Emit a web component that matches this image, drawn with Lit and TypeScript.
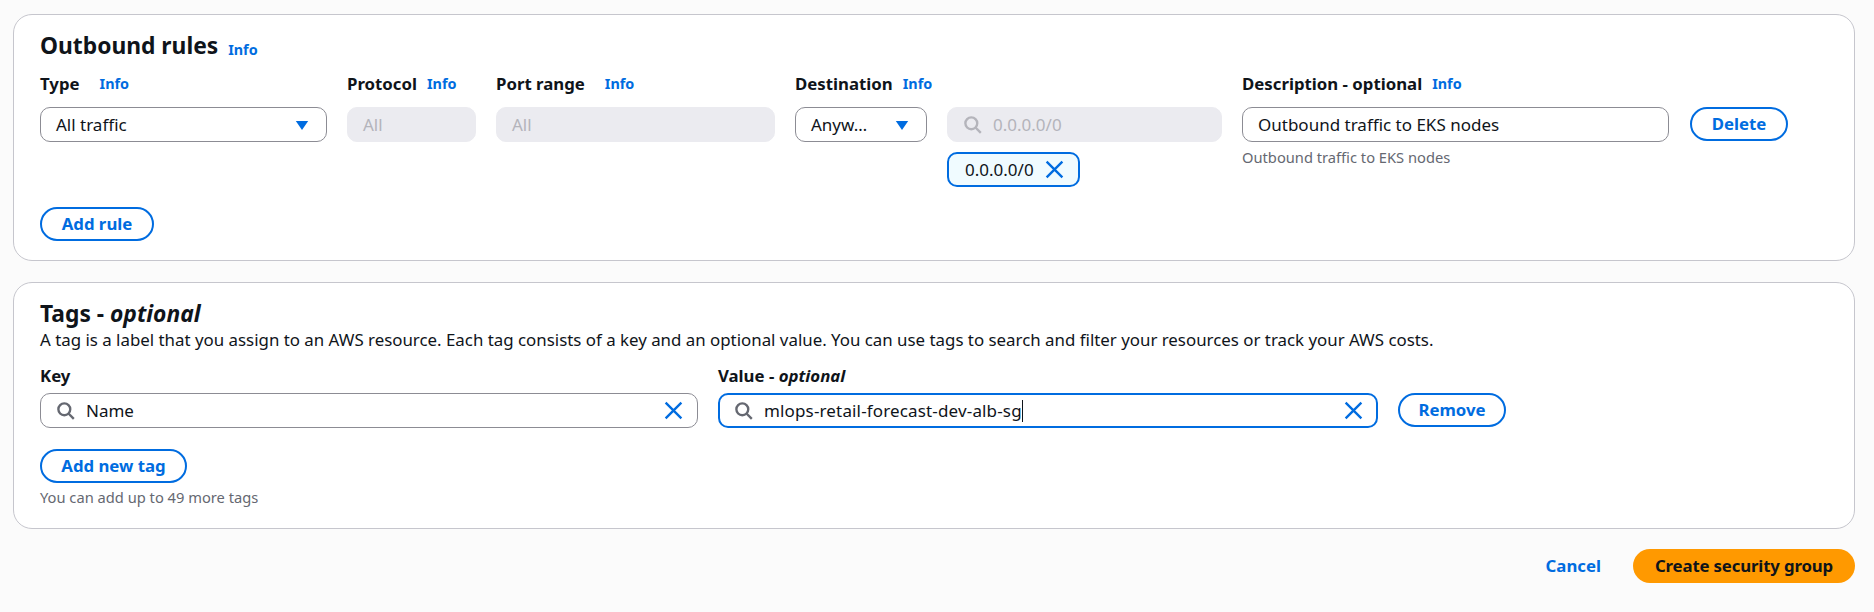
import { LitElement, html, css, svg } from "lit";
import { customElement } from "lit/decorators.js";

const searchIcon = html`<svg class="icon" viewBox="0 0 16 16" fill="none" stroke="currentColor" stroke-width="2">
  ${svg`<circle cx="7" cy="7" r="5"></circle><path d="M15 15l-4.5-4.5"></path>`}
</svg>`;

const closeIcon = html`<svg class="icon close" viewBox="0 0 16 16" fill="none" stroke="currentColor" stroke-width="1.8">
  ${svg`<path d="M2 2l12 12M14 2L2 14"></path>`}
</svg>`;

const caretIcon = html`<svg class="caret" viewBox="0 0 16 16" fill="currentColor">
  ${svg`<path d="M2.5 4.5h11L8 12.5z"></path>`}
</svg>`;

@customElement("app-root")
export class AppRoot extends LitElement {
  static styles = css`
    :host {
      display: block;
      min-height: 612px;
      background: #fbfbfb;
      color: #0f141a;
      font-family: "Noto Sans", "Liberation Sans", sans-serif;
      font-size: 16.8px;
      line-height: 24px;
    }
    .page {
      padding: 14px 19px 0 13px;
      display: flex;
      flex-direction: column;
      gap: 21px;
    }
    .card {
      background: #fff;
      border: 1px solid #c6c6cd;
      border-radius: 19px;
      padding: 16px 26px 19px;
    }
    h2 {
      margin: 0;
      font-size: 22.8px;
      line-height: 29px;
      font-weight: 700;
    }
    h2 em {
      font-weight: 700;
    }
    .info {
      color: #006ce0;
      font-size: 14.4px;
      font-weight: 700;
    }
    h2 .info {
      margin-left: 4px;
      vertical-align: -1px;
    }
    .rule-row {
      display: grid;
      grid-template-columns: 287px 129px 279px 132px 275px 427px auto;
      column-gap: 20px;
      margin-top: 8px;
      align-items: start;
    }
    .field {
      display: flex;
      flex-direction: column;
    }
    .label {
      display: flex;
      align-items: center;
      gap: 10px;
      font-weight: 700;
      font-size: 16.8px;
      height: 24px;
      margin-bottom: 11px;
      white-space: nowrap;
    }
    .label.wide {
      gap: 20px;
    }
    .control {
      box-sizing: border-box;
      height: 35px;
      display: flex;
      align-items: center;
      gap: 11px;
      padding: 0 15px;
      border: 1px solid #8c8c94;
      border-radius: 10px;
      background: #fff;
      font-size: 17px;
      white-space: nowrap;
    }
    .control .grow {
      flex: 1;
    }
    .control.disabled {
      background: #ebebf0;
      border-color: #ebebf0;
      color: #b4b4bb;
    }
    .control.focused {
      border: 2px solid #006ce0;
      padding: 0 14px;
      letter-spacing: 0.15px;
    }
    .control.dest {
      gap: 0;
      justify-content: space-between;
    }
    .icon {
      width: 19px;
      height: 19px;
      flex: none;
      color: #656871;
    }
    .disabled .icon {
      color: #b4b4bb;
    }
    .icon.close {
      width: 21px;
      height: 21px;
      margin: 0 -2px;
      color: #006ce0;
    }
    .caret {
      width: 18px;
      height: 18px;
      flex: none;
      color: #006ce0;
    }
    .token {
      box-sizing: border-box;
      align-self: flex-start;
      display: flex;
      align-items: center;
      gap: 12px;
      width: 133px;
      height: 35px;
      margin-top: 10px;
      padding: 0 0 0 16px;
      background: #f0fbff;
      border: 2px solid #006ce0;
      border-radius: 10px;
      font-size: 17px;
    }
    .hint {
      margin-top: 3px;
      font-size: 14.7px;
      color: #656871;
    }
    .tags .hint {
      margin-top: 2px;
    }
    .btn {
      box-sizing: border-box;
      display: inline-flex;
      align-items: center;
      justify-content: center;
      height: 34px;
      border: 2px solid #006ce0;
      border-radius: 20px;
      background: #fff;
      color: #006ce0;
      font-weight: 700;
      white-space: nowrap;
    }
    .add-rule {
      width: 114px;
      margin-top: 20px;
    }
    .delete {
      width: 98px;
      margin-left: 1px;
    }
    .desc {
      font-size: 16.87px;
    }
    .tag-row {
      display: grid;
      grid-template-columns: 658px 660px auto;
      column-gap: 20px;
      margin-top: 12px;
      align-items: start;
    }
    .tag-row .label {
      margin-bottom: 5px;
    }
    .remove {
      width: 108px;
    }
    .add-tag {
      width: 147px;
      margin-top: 21px;
    }
    .caret-line {
      display: inline-block;
      width: 1px;
      height: 22px;
      background: #0f141a;
      vertical-align: -5px;
    }
    .footer {
      display: flex;
      justify-content: flex-end;
      align-items: center;
      gap: 32px;
      margin-top: -1px;
    }
    .cancel {
      color: #006ce0;
      font-weight: 700;
    }
    .create {
      box-sizing: border-box;
      display: inline-flex;
      align-items: center;
      justify-content: center;
      width: 222px;
      height: 34px;
      border-radius: 20px;
      background: #ff9900;
      color: #0f141a;
      font-weight: 700;
      letter-spacing: -0.15px;
    }
  `;

  render() {
    return html`
      <div class="page">
        <section class="card">
          <h2>Outbound rules <span class="info">Info</span></h2>
          <div class="rule-row">
            <div class="field">
              <div class="label wide">Type <span class="info">Info</span></div>
              <div class="control"><span class="grow">All traffic</span>${caretIcon}</div>
            </div>
            <div class="field">
              <div class="label">Protocol <span class="info">Info</span></div>
              <div class="control disabled">All</div>
            </div>
            <div class="field">
              <div class="label wide">Port range <span class="info">Info</span></div>
              <div class="control disabled">All</div>
            </div>
            <div class="field">
              <div class="label">Destination <span class="info">Info</span></div>
              <div class="control dest">Anyw…${caretIcon}</div>
            </div>
            <div class="field">
              <div class="label"></div>
              <div class="control disabled">${searchIcon}0.0.0.0/0</div>
              <div class="token">0.0.0.0/0 ${closeIcon}</div>
            </div>
            <div class="field">
              <div class="label">Description - optional <span class="info">Info</span></div>
              <div class="control">Outbound traffic to EKS nodes</div>
              <div class="hint">Outbound traffic to EKS nodes</div>
            </div>
            <div class="field">
              <div class="label"></div>
              <div class="btn delete">Delete</div>
            </div>
          </div>
          <div class="btn add-rule">Add rule</div>
        </section>

        <section class="card tags">
          <h2>Tags - <em>optional</em></h2>
          <div class="desc">
            A tag is a label that you assign to an AWS resource. Each tag consists of a key and an
            optional value. You can use tags to search and filter your resources or track your AWS
            costs.
          </div>
          <div class="tag-row">
            <div class="field">
              <div class="label">Key</div>
              <div class="control">${searchIcon}<span class="grow">Name</span>${closeIcon}</div>
            </div>
            <div class="field">
              <div class="label"><span>Value - <em>optional</em></span></div>
              <div class="control focused">
                ${searchIcon}<span class="grow">mlops-retail-forecast-dev-alb-sg<span class="caret-line"></span></span>${closeIcon}
              </div>
            </div>
            <div class="field">
              <div class="label"></div>
              <div class="btn remove">Remove</div>
            </div>
          </div>
          <div class="btn add-tag">Add new tag</div>
          <div class="hint">You can add up to 49 more tags</div>
        </section>

        <div class="footer">
          <span class="cancel">Cancel</span>
          <div class="create">Create security group</div>
        </div>
      </div>
    `;
  }
}
